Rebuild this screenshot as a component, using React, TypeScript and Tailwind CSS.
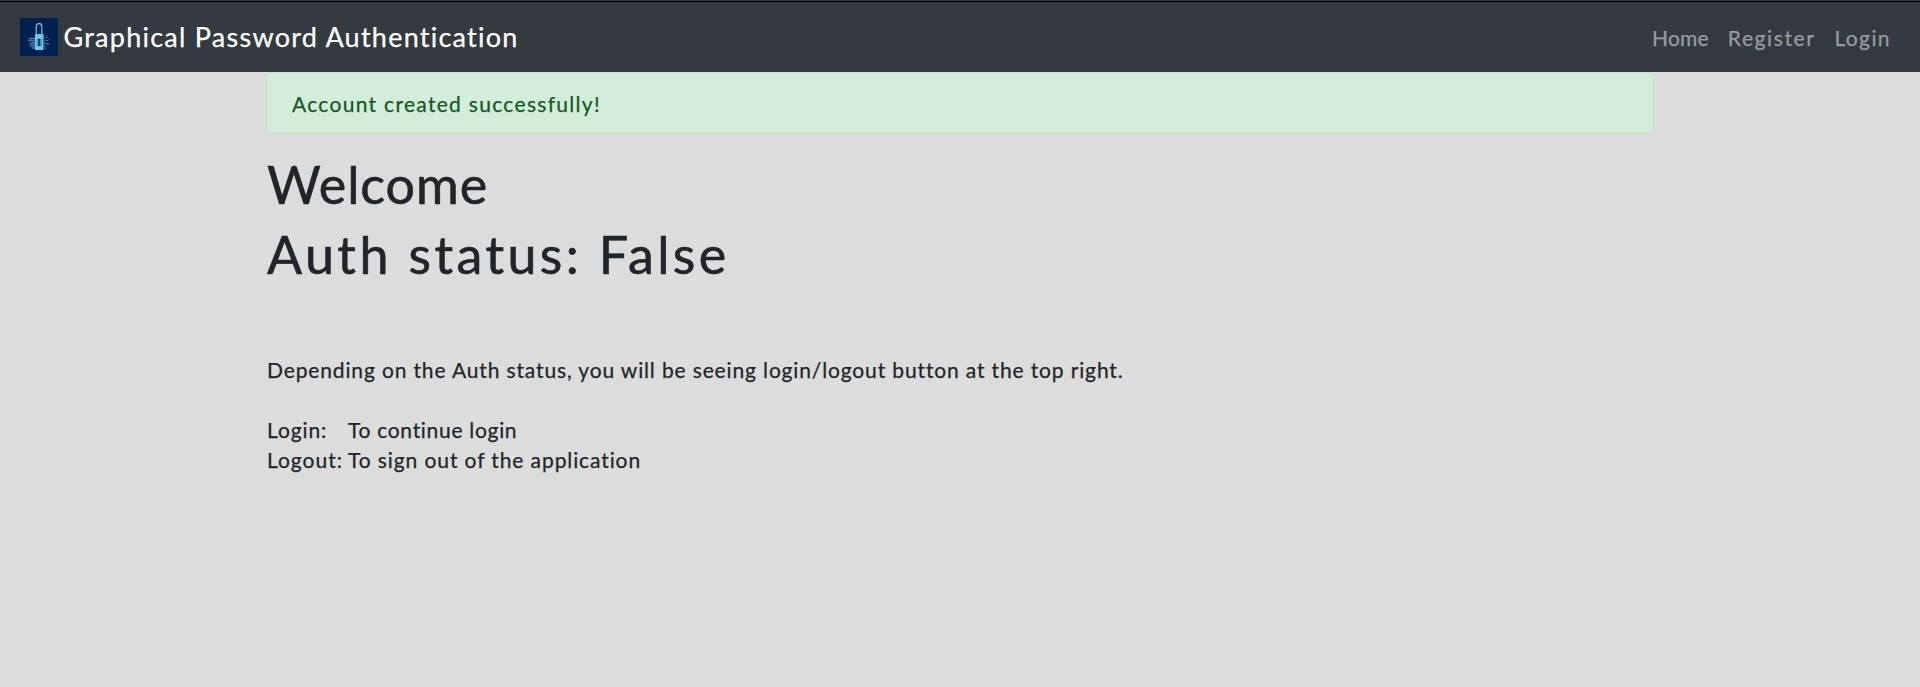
function LockLogo() {
  return (
    <svg className="block h-[38px] w-[38px] shrink-0" viewBox="0 0 38 38" fill="none">
      <rect width="38" height="38" fill="#00204f" />
      <g stroke="#3f78a8" strokeWidth="0.9">
        <path d="M9 20.5h6M8 22.5h7M11 24.3h4M9 26h6M10 28h5M12 30h3" strokeWidth="1.3" />
        <path d="M24 21l2-2h2M24 23.5l2-1h2M24 25.5h4.500M24 27.500l3 1.500M24 29l2 2M28 22l1-.5M27 26.500h2" />
      </g>
      <path d="M16.200 17V9.500c0-2.200 1-4 2.800-4s2.800 1.800 2.800 4V17" stroke="#6cb9e2" strokeWidth="1.300" />
      <rect x="15" y="16" width="8.500" height="3" fill="#6cc0e9" />
      <rect x="15" y="18" width="8.500" height="14" fill="#78c5ec" />
      <path d="M16.500 21h5.500v7.500h-5.500z" fill="#4a9bc8" />
      <path d="M18 20.800h2.400l-.5 3 .5 4H18l.5-4z" fill="#052b57" />
    </svg>
  );
}

export default function App() {
  return (
    <div className="min-h-screen bg-[#dcdcdc] font-['Lato','Open_Sans',sans-serif] text-[21px] leading-[30px] text-[#212529] [-webkit-text-stroke:0.25px]">
      <div className="h-px bg-[#343a40]" />
      <div className="h-px bg-black" />
      <nav className="flex h-[70px] items-center justify-between bg-[#343a40] pl-[19.500px] pr-[29px]">
        <a className="flex items-center gap-[6px] text-white">
          <LockLogo />
          <span className="whitespace-nowrap text-[27px] leading-[38px] tracking-[1.25px]">Graphical Password Authentication</span>
        </a>
        <div className="flex gap-[19px] pt-px text-[#999c9f]">
          <a className="tracking-[0.2px]">Home</a>
          <a className="tracking-[1.6px]">Register</a>
          <a className="tracking-[1.4px]">Login</a>
        </div>
      </nav>
      <main className="ml-[266px] w-[1388px]">
        <div className="mb-5 h-[62px] rounded-[5px] border border-[#c3e6cb] bg-[#d4edda] px-[25px] pt-4 text-[#155724]">
          <span className="tracking-[1.3px]">Account created successfully!</span>
        </div>
        <div className="pl-px">
          <h1 className="h-[70px] text-[52px] leading-[60px] [-webkit-text-stroke:0.6px]"><span className="tracking-[0.9px]">Welcome</span></h1>
          <h1 className="h-[70px] text-[52px] leading-[60px] [-webkit-text-stroke:0.6px]"><span className="tracking-[3.4px]">Auth status: False</span></h1>
          <p className="mt-[61px] tracking-[0.86px]">Depending on the Auth status, you will be seeing login/logout button at the top right.</p>
          <div className="mt-[30px] grid grid-cols-[81px_auto] justify-start whitespace-nowrap">
            <span className="tracking-[0.9px]">Login:</span>
            <span className="tracking-[0.7px]">To continue login</span>
            <span className="tracking-[1px]">Logout:</span>
            <span className="tracking-[0.9px]">To sign out of the application</span>
          </div>
        </div>
      </main>
    </div>
  );
}
